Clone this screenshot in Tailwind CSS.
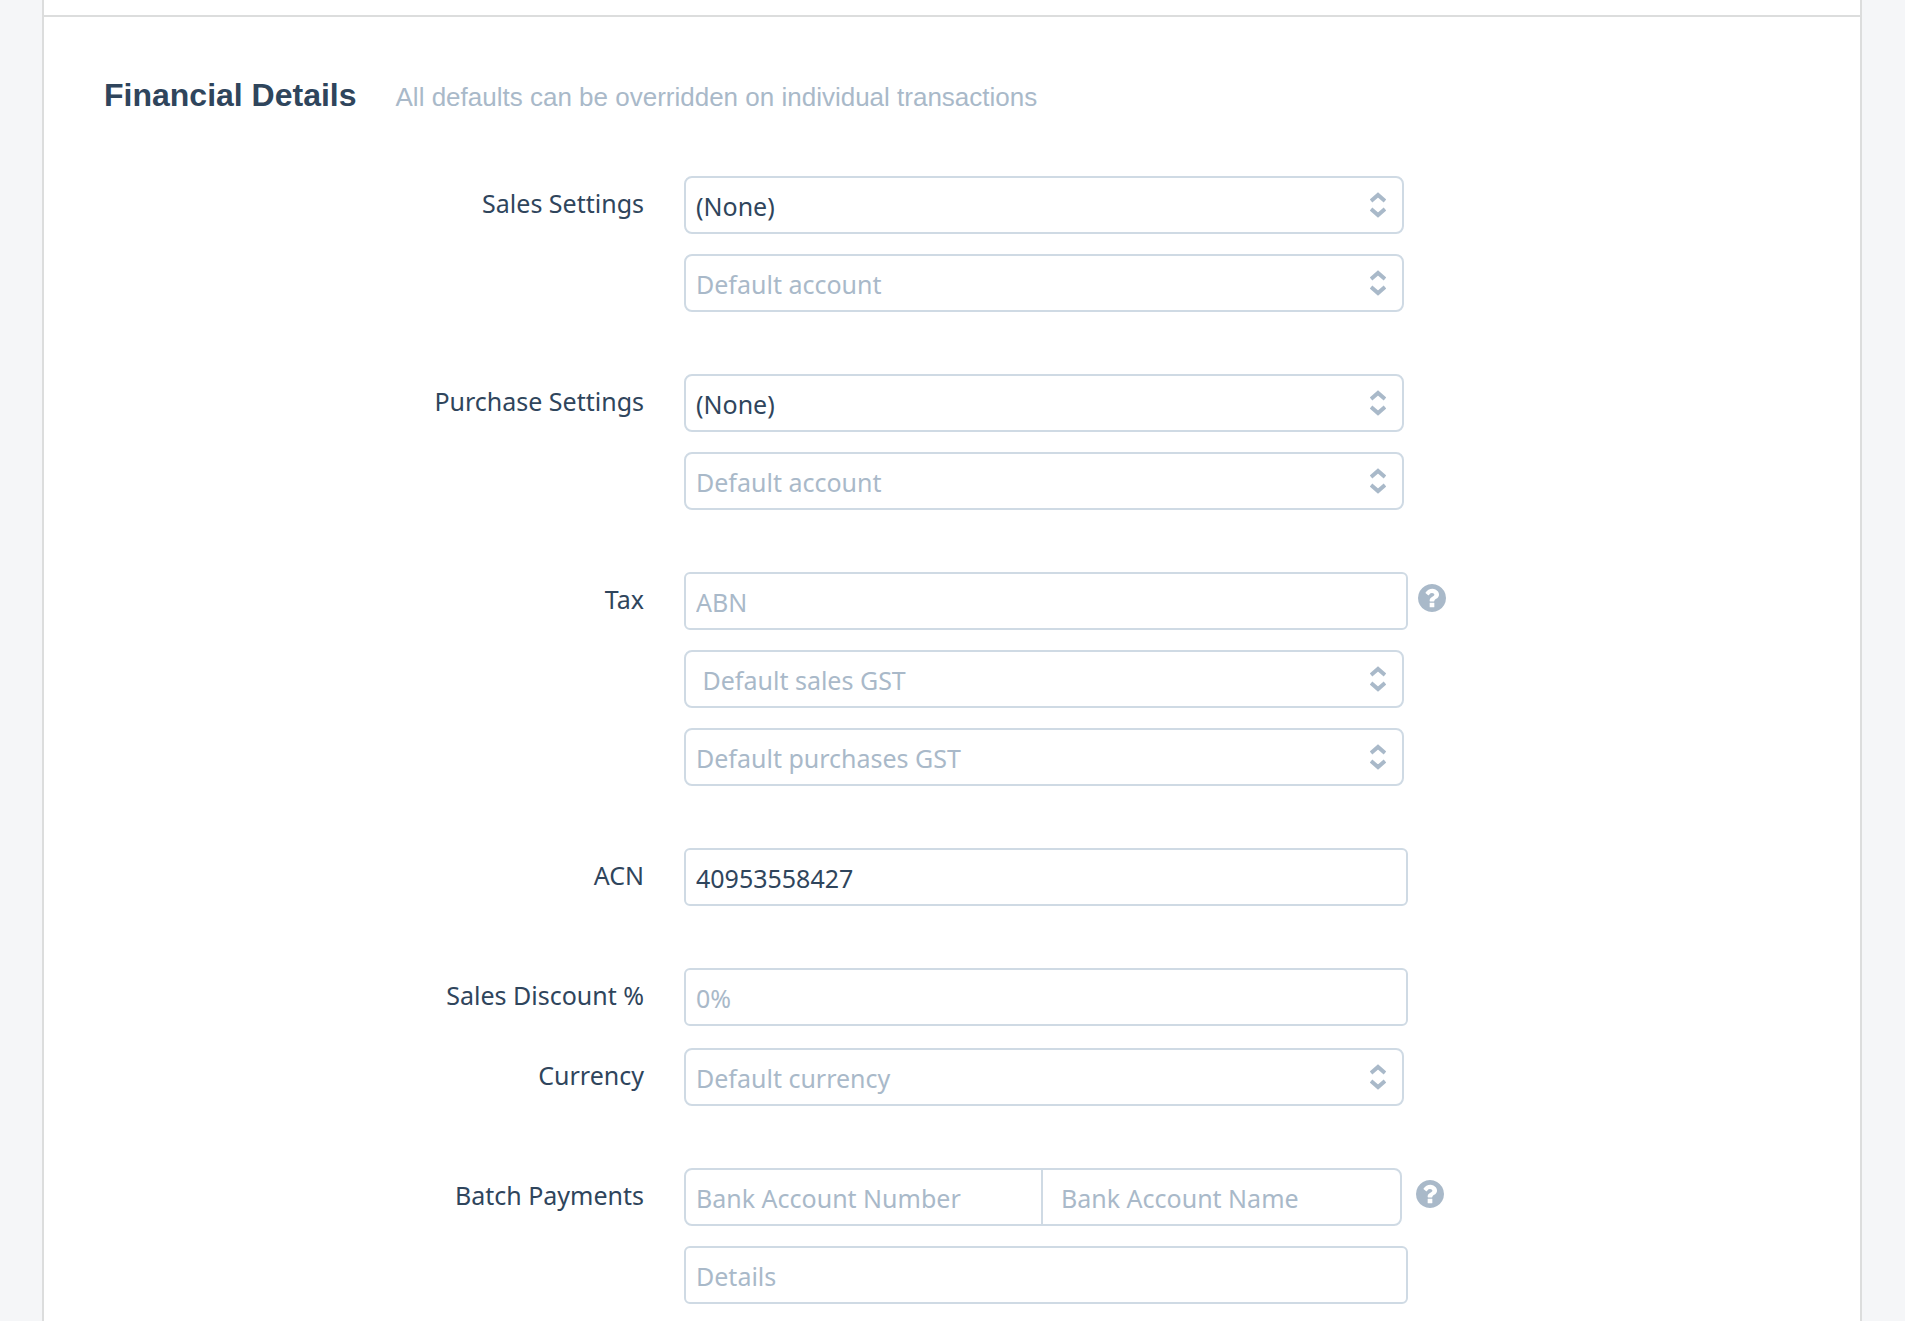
<!DOCTYPE html>
<html lang="en">
<head>
  <meta charset="utf-8">
  <meta name="viewport" content="width=device-width, initial-scale=1">
  <title>Financial Details</title>
  <script src="https://cdn.jsdelivr.net/npm/@tailwindcss/browser@4"></script>
</head>
<body class="bg-[#f5f6f8] text-[#2f455c]">
  <!-- Icons shared by the form controls -->
  <svg class="hidden" aria-hidden="true">
    <symbol id="sort" viewBox="0 0 16 26">
      <path d="M1 9 8 3l7 6M1 17l7 6 7-6" fill="none" stroke="currentColor" stroke-width="4" />
    </symbol>
    <symbol id="help" viewBox="0 128 1536 1536">
      <path fill="currentColor" d="M896 1376v-192q0-14-9-23t-23-9H672q-14 0-23 9t-9 23v192q0 14 9 23t23 9h192q14 0 23-9t9-23zm256-672q0-88-55.500-163T958 425t-170-41q-243 0-371 213-15 24 8 42l132 100q7 6 19 6 16 0 25-12 53-68 86-92 34-24 86-24 48 0 85.500 26t37.500 59q0 38-20 61t-68 45q-63 28-115.500 86.500T640 1020v36q0 14 9 23t23 9h192q14 0 23-9t9-23q0-19 21.500-49.500T972 957q32-18 49-28.500t46-35 44.500-48 28-60.500 12.500-81zm384 192q0 209-103 385.500T1153.500 1561 768 1664t-385.500-103T103 1281.500 0 896t103-385.500T382.500 231 768 128t385.500 103T1433 510.500 1536 896z" />
    </symbol>
  </svg>

  <main class="mr-[43px] ml-[42px] min-h-screen border-x-2 border-[#dcdddd] bg-white pt-[15px]">
    <form class="border-t-2 border-[#dcdddd] pt-[60px] pb-3">
      <header class="flex flex-wrap items-baseline gap-x-[39px] px-[60px] font-['Liberation_Sans',Arial,sans-serif]">
        <h1 class="text-[32px] leading-9 font-bold">Financial Details</h1>
        <p class="text-[26px] leading-9 text-[#a9b9c9]">All defaults can be overridden on individual transactions</p>
      </header>

      <div class="mt-[61px] flex flex-col gap-[62px] px-4 font-[Tahoma,'Noto_Sans',sans-serif] text-[25px] leading-[34px] xl:px-0">
        <section class="grid gap-x-10 xl:grid-cols-[600px_minmax(0,720px)]">
          <label for="sales-settings" class="pt-[10px] xl:text-right">Sales Settings</label>
          <div class="flex flex-col gap-5">
            <div class="relative">
              <select id="sales-settings" class="block h-[58px] w-full appearance-none rounded-lg border-2 border-[#cfdae4] bg-white pt-[2px] pr-12 pl-[10px]">
                <option>(None)</option>
              </select>
              <svg class="pointer-events-none absolute top-4 right-[18px] h-[26px] w-4 text-[#a9b9c9]"><use href="#sort" /></svg>
            </div>
            <div class="relative">
              <select aria-label="Default sales account" class="block h-[58px] w-full appearance-none rounded-lg border-2 border-[#cfdae4] bg-white pt-[2px] pr-12 pl-[10px] text-[#a9b9c9]">
                <option>Default account</option>
              </select>
              <svg class="pointer-events-none absolute top-4 right-[18px] h-[26px] w-4 text-[#a9b9c9]"><use href="#sort" /></svg>
            </div>
          </div>
        </section>

        <section class="grid gap-x-10 xl:grid-cols-[600px_minmax(0,720px)]">
          <label for="purchase-settings" class="pt-[10px] xl:text-right">Purchase Settings</label>
          <div class="flex flex-col gap-5">
            <div class="relative">
              <select id="purchase-settings" class="block h-[58px] w-full appearance-none rounded-lg border-2 border-[#cfdae4] bg-white pt-[2px] pr-12 pl-[10px]">
                <option>(None)</option>
              </select>
              <svg class="pointer-events-none absolute top-4 right-[18px] h-[26px] w-4 text-[#a9b9c9]"><use href="#sort" /></svg>
            </div>
            <div class="relative">
              <select aria-label="Default purchase account" class="block h-[58px] w-full appearance-none rounded-lg border-2 border-[#cfdae4] bg-white pt-[2px] pr-12 pl-[10px] text-[#a9b9c9]">
                <option>Default account</option>
              </select>
              <svg class="pointer-events-none absolute top-4 right-[18px] h-[26px] w-4 text-[#a9b9c9]"><use href="#sort" /></svg>
            </div>
          </div>
        </section>

        <section class="grid gap-x-10 xl:grid-cols-[600px_minmax(0,762px)]">
          <label for="abn" class="pt-[10px] xl:text-right">Tax</label>
          <div class="flex flex-col gap-5">
            <div class="flex items-start gap-[10px]">
              <input id="abn" type="text" placeholder="ABN" class="h-[58px] min-w-0 flex-1 rounded-md border-2 border-[#cfdae4] bg-white px-[10px] pt-[2px] placeholder:text-[#a9b9c9]">
              <button type="button" aria-label="Help with tax" class="mt-3 size-7 shrink-0 text-[#a9b9c9]">
                <svg class="size-7"><use href="#help" /></svg>
              </button>
            </div>
            <div class="relative max-w-[720px]">
              <select aria-label="Default sales GST" class="block h-[58px] w-full appearance-none rounded-lg border-2 border-[#cfdae4] bg-white pt-[2px] pr-12 pl-[10px] text-[#a9b9c9]">
                <option>&nbsp;Default sales GST</option>
              </select>
              <svg class="pointer-events-none absolute top-4 right-[18px] h-[26px] w-4 text-[#a9b9c9]"><use href="#sort" /></svg>
            </div>
            <div class="relative max-w-[720px]">
              <select aria-label="Default purchases GST" class="block h-[58px] w-full appearance-none rounded-lg border-2 border-[#cfdae4] bg-white pt-[2px] pr-12 pl-[10px] text-[#a9b9c9]">
                <option>Default purchases GST</option>
              </select>
              <svg class="pointer-events-none absolute top-4 right-[18px] h-[26px] w-4 text-[#a9b9c9]"><use href="#sort" /></svg>
            </div>
          </div>
        </section>

        <section class="grid gap-x-10 xl:grid-cols-[600px_minmax(0,724px)]">
          <label for="acn" class="pt-[10px] xl:text-right">ACN</label>
          <input id="acn" type="text" value="40953558427" class="h-[58px] w-full rounded-md border-2 border-[#cfdae4] bg-white px-[10px] pt-[2px]">
        </section>

        <section class="flex flex-col gap-[22px]">
          <div class="grid gap-x-10 xl:grid-cols-[600px_minmax(0,724px)]">
            <label for="discount" class="pt-[10px] xl:text-right">Sales Discount %</label>
            <input id="discount" type="text" placeholder="0%" class="h-[58px] w-full rounded-md border-2 border-[#cfdae4] bg-white px-[10px] pt-[2px] placeholder:text-[#a9b9c9]">
          </div>
          <div class="grid gap-x-10 xl:grid-cols-[600px_minmax(0,720px)]">
            <label for="currency" class="pt-[10px] xl:text-right">Currency</label>
            <div class="relative">
              <select id="currency" class="block h-[58px] w-full appearance-none rounded-lg border-2 border-[#cfdae4] bg-white pt-[2px] pr-12 pl-[10px] text-[#a9b9c9]">
                <option>Default currency</option>
              </select>
              <svg class="pointer-events-none absolute top-4 right-[18px] h-[26px] w-4 text-[#a9b9c9]"><use href="#sort" /></svg>
            </div>
          </div>
        </section>

        <section class="grid gap-x-10 xl:grid-cols-[600px_minmax(0,760px)]">
          <label for="bank-number" class="pt-[10px] xl:text-right">Batch Payments</label>
          <div class="flex flex-col gap-5">
            <div class="flex items-start gap-[14px]">
              <!-- Account number and name share one outline -->
              <div class="flex h-[58px] min-w-0 flex-1 divide-x-2 divide-[#cfdae4] rounded-lg border-2 border-[#cfdae4] bg-white">
                <input id="bank-number" type="text" placeholder="Bank Account Number" class="w-1/2 min-w-0 px-[10px] pt-[2px] placeholder:text-[#a9b9c9]">
                <input type="text" aria-label="Bank Account Name" placeholder="Bank Account Name" class="w-1/2 min-w-0 px-[18px] pt-[2px] placeholder:text-[#a9b9c9]">
              </div>
              <button type="button" aria-label="Help with batch payments" class="mt-3 size-7 shrink-0 text-[#a9b9c9]">
                <svg class="size-7"><use href="#help" /></svg>
              </button>
            </div>
            <input type="text" aria-label="Details" placeholder="Details" class="h-[58px] w-full max-w-[724px] rounded-md border-2 border-[#cfdae4] bg-white px-[10px] pt-[2px] placeholder:text-[#a9b9c9]">
          </div>
        </section>
      </div>
    </form>
  </main>
</body>
</html>
